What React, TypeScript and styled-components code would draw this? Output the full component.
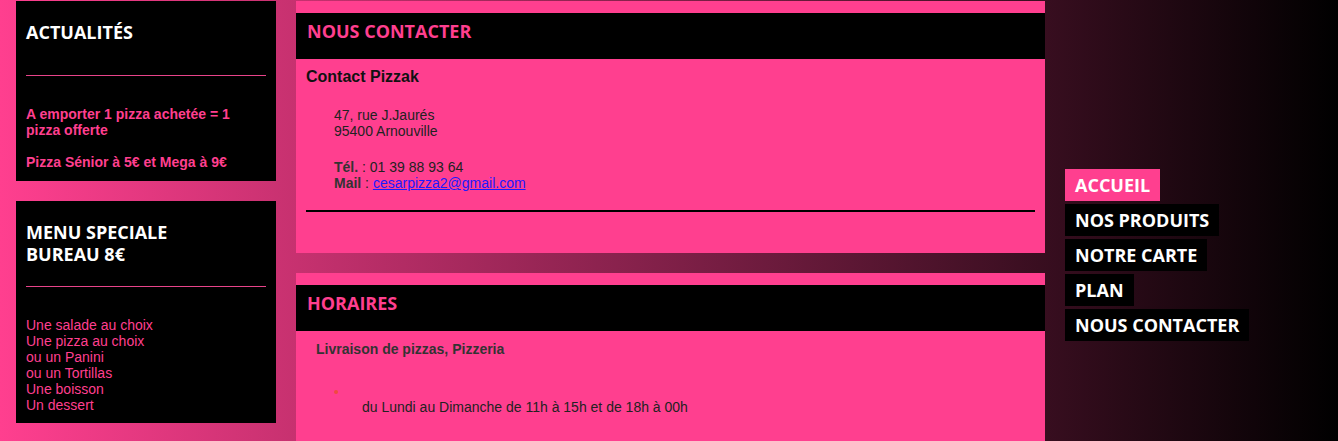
import React from "react";
import styled, { createGlobalStyle } from "styled-components";

const PINK = "#ff3f8f";

const Global = createGlobalStyle`
  html, body { margin: 0; padding: 0; }
  body {
    width: 1338px;
    height: 441px;
    overflow: hidden;
    background: linear-gradient(to right, #ff3f8f 0px, #000 1338px);
    font-family: Arial, "Liberation Sans", sans-serif;
  }
`;

const Page = styled.div`
  display: flex;
  align-items: flex-start;
  padding-left: 16px;
  height: 441px;
`;

const LeftCol = styled.div`
  width: 260px;
  display: flex;
  flex-direction: column;
  gap: 20px;
  padding-top: 1px;
`;

const SideBox = styled.section<{ $h: number }>`
  background: #000;
  height: ${(p) => p.$h}px;
  box-sizing: border-box;
  padding: 20px 10px 10px;
`;

const SideTitle = styled.h2<{ $mb: number }>`
  margin: 0 0 ${(p) => p.$mb}px;
  font-family: "Open Sans", sans-serif;
  font-weight: 700;
  font-size: 18px;
  line-height: 22px;
  color: #fff;
`;

const SideRule = styled.hr`
  margin: 0 0 30px;
  border: 0;
  height: 1px;
  background: #e8448a;
`;

const SideText = styled.p<{ $bold?: boolean }>`
  margin: 0;
  font-size: 14px;
  line-height: 16px;
  color: ${PINK};
  font-weight: ${(p) => (p.$bold ? 700 : 400)};
`;

const MainCol = styled.div`
  width: 749px;
  margin-left: 20px;
  display: flex;
  flex-direction: column;
  gap: 20px;
  padding-top: 1px;
`;

const Panel = styled.section<{ $h: number }>`
  background: ${PINK};
  height: ${(p) => p.$h}px;
  box-sizing: border-box;
  padding-top: 12px;
  overflow: hidden;
`;

const PanelHeader = styled.h2`
  margin: 0;
  height: 46px;
  box-sizing: border-box;
  padding: 7px 11px 0;
  background: #000;
  font-family: "Open Sans", sans-serif;
  font-weight: 700;
  font-size: 18px;
  line-height: 22px;
  color: ${PINK};
`;

const PanelBody = styled.div`
  padding: 0 10px;
`;

const ContactTitle = styled.h3`
  margin: 9px 0 0;
  font-size: 16px;
  line-height: 18px;
  font-weight: 700;
  color: #111;
`;

const Address = styled.p<{ $mt: number }>`
  margin: ${(p) => p.$mt}px 0 0 28px;
  font-size: 14px;
  line-height: 16px;
  color: #222;
`;

const Label = styled.b`
  color: #333;
`;

const Mail = styled.a`
  color: #1a1aff;
  text-decoration: underline;
`;

const Rule = styled.hr`
  margin: 19px 0 0;
  border: 0;
  height: 2px;
  background: #000;
`;

const Subtitle = styled.h4`
  margin: 9px 0 0 10px;
  font-size: 14px;
  line-height: 18px;
  font-weight: 700;
  color: #333;
`;

const Dot = styled.span`
  display: block;
  width: 4px;
  height: 4px;
  border-radius: 50%;
  background: #f04a3e;
  margin: 32px 0 0 28px;
`;

const Hours = styled.p`
  margin: 5px 0 0 56px;
  font-size: 14px;
  line-height: 16px;
  color: #222;
`;

const Nav = styled.nav`
  margin-left: 20px;
  margin-top: 169px;
  display: flex;
  flex-direction: column;
  align-items: flex-start;
  gap: 3px;
`;

const NavItem = styled.a<{ $active?: boolean }>`
  display: block;
  height: 32px;
  line-height: 32px;
  padding: 0 10px;
  background: ${(p) => (p.$active ? PINK : "#000")};
  color: #fff;
  font-family: "Open Sans", sans-serif;
  font-weight: 700;
  font-size: 18px;
  text-decoration: none;
`;

export default function App() {
  return (
    <>
      <Global />
      <Page>
        <LeftCol>
          <SideBox $h={180}>
            <SideTitle $mb={32}>ACTUALITÉS</SideTitle>
            <SideRule />
            <SideText $bold>
              A emporter 1 pizza achetée = 1 pizza offerte
              <br />
              <br />
              Pizza Sénior à 5€ et Mega à 9€
            </SideText>
          </SideBox>
          <SideBox $h={222}>
            <SideTitle $mb={21}>
              MENU SPECIALE
              <br />
              BUREAU 8€
            </SideTitle>
            <SideRule />
            <SideText>
              Une salade au choix
              <br />
              Une pizza au choix
              <br />
              ou un Panini
              <br />
              ou un Tortillas
              <br />
              Une boisson
              <br />
              Un dessert
            </SideText>
          </SideBox>
        </LeftCol>

        <MainCol>
          <Panel $h={252}>
            <PanelHeader>NOUS CONTACTER</PanelHeader>
            <PanelBody>
              <ContactTitle>Contact Pizzak</ContactTitle>
              <Address $mt={21}>
                47, rue J.Jaurés
                <br />
                95400 Arnouville
              </Address>
              <Address $mt={20}>
                <Label>Tél.</Label> : 01 39 88 93 64
                <br />
                <Label>Mail</Label> : <Mail href="#">cesarpizza2@gmail.com</Mail>
              </Address>
              <Rule />
            </PanelBody>
          </Panel>
          <Panel $h={170}>
            <PanelHeader>HORAIRES</PanelHeader>
            <PanelBody>
              <Subtitle>Livraison de pizzas, Pizzeria</Subtitle>
              <Dot />
              <Hours>du Lundi au Dimanche de 11h à 15h et de 18h à 00h</Hours>
            </PanelBody>
          </Panel>
        </MainCol>

        <Nav>
          <NavItem href="#" $active>ACCUEIL</NavItem>
          <NavItem href="#">NOS PRODUITS</NavItem>
          <NavItem href="#">NOTRE CARTE</NavItem>
          <NavItem href="#">PLAN</NavItem>
          <NavItem href="#">NOUS CONTACTER</NavItem>
        </Nav>
      </Page>
    </>
  );
}
